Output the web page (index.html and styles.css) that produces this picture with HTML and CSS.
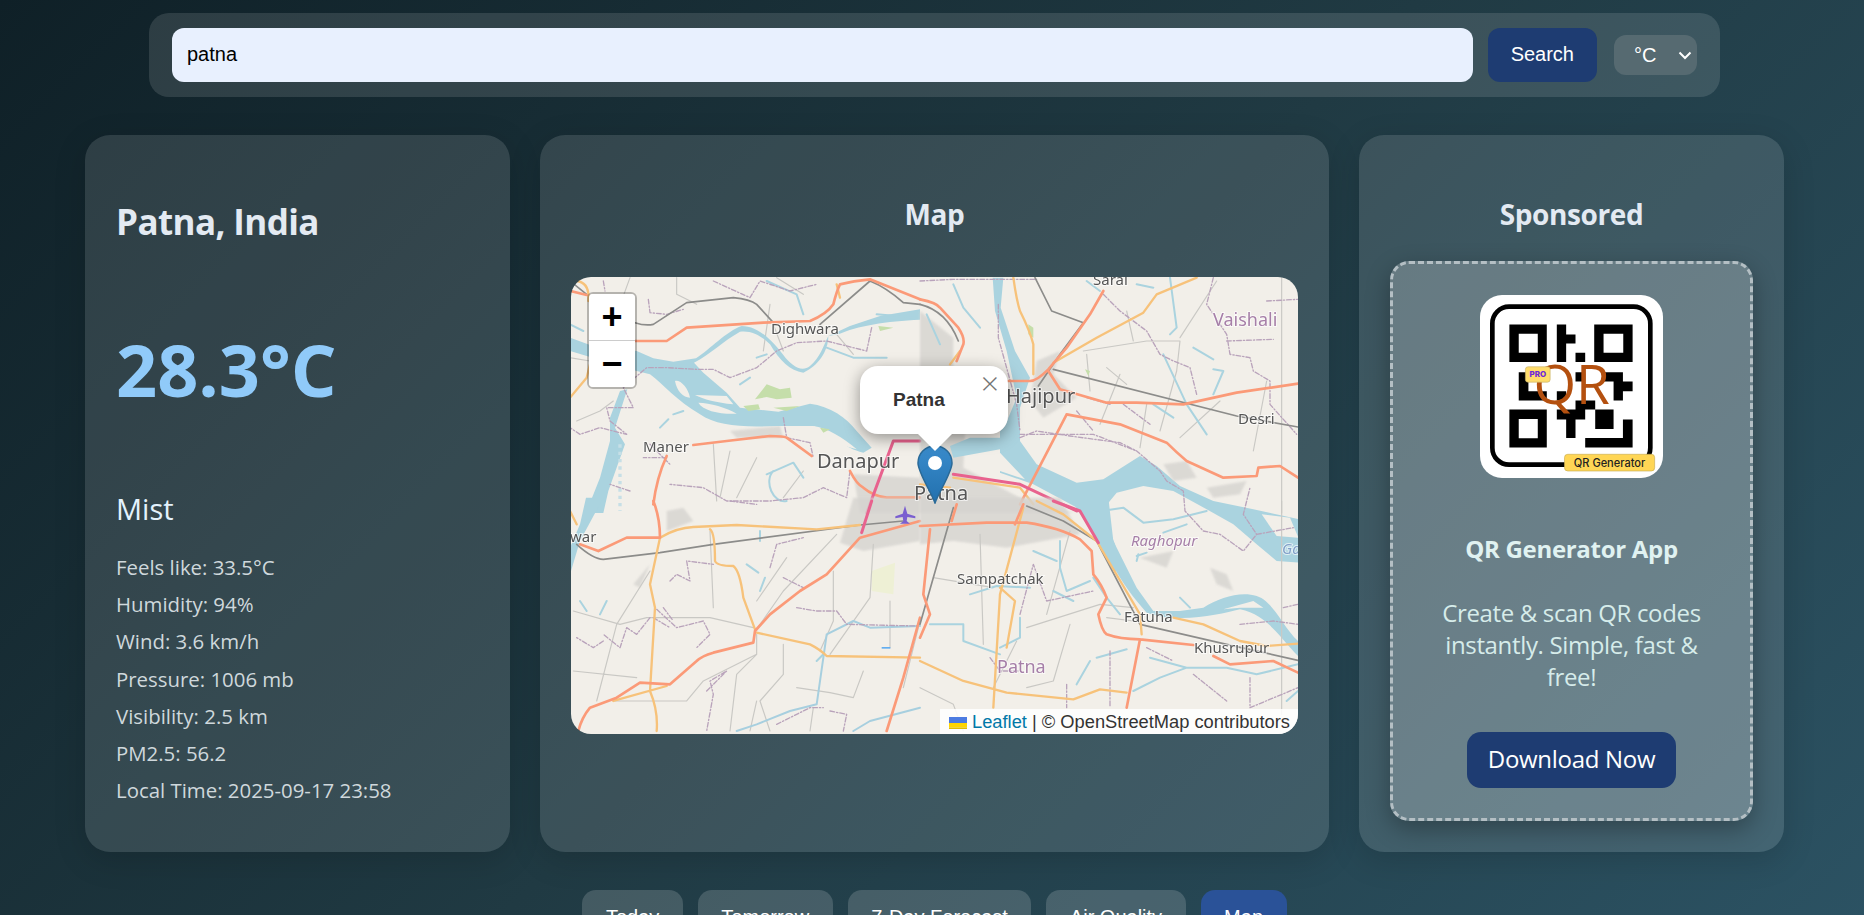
FILE: index.html
```html
<!DOCTYPE html>
<html lang="en">
<head>
<meta charset="utf-8">
<title>Weather</title>
<link rel="stylesheet" href="styles.css">
</head>
<body>
<form class="search-bar">
  <input class="search-input" type="text" value="patna">
  <button class="search-btn" type="button">Search</button>
  <select class="unit"><option>°C</option><option>°F</option></select>
</form>
<main class="layout">
  <section class="card weather">
    <h1 class="city">Patna, India</h1>
    <div class="temp">28.3°C</div>
    <div class="cond">Mist</div>
    <ul class="details">
      <li>Feels like: 33.5°C</li>
      <li>Humidity: 94%</li>
      <li>Wind: 3.6 km/h</li>
      <li>Pressure: 1006 mb</li>
      <li>Visibility: 2.5 km</li>
      <li>PM2.5: 56.2</li>
      <li>Local Time: 2025-09-17 23:58</li>
    </ul>
  </section>
  <section class="card">
    <h2 class="card-title">Map</h2>
    <div class="map">
      <svg class="tiles" width="727" height="457" viewBox="0 0 727 457" xmlns="http://www.w3.org/2000/svg">
        <rect width="727" height="457" fill="#f2efe9"/>
        <!-- main river, under every road -->
        <g transform="translate(429,144) scale(.33333)">
          <path class="river" d="M45 0L60 60L110 130L230 185L310 175L420 105L470 135L540 195L640 240L760 265L900 295V425L830 420L770 370L700 310L620 265L520 210L430 195L350 215L305 270L345 370L365 450L340 450L295 365L240 265L100 190L0 155V150L75 175L0 95V30L30 0Z"/>
          <path class="land" d="M785 280L870 290L895 350L830 345Z"/>
          <path class="stream" d="M305 270L370 260L430 305L520 295L620 270M490 335L560 310M410 405L440 395"/>
        </g>
        <g transform="translate(349,224) scale(.33333)">
          <path class="river" d="M450 -10H565L580 120L650 260L700 330L780 330L850 320C900 290 960 270 1010 285C1060 300 1090 380 1134 420V465C1080 410 1040 340 960 325C900 340 780 370 680 335C640 290 610 250 570 180Z"/>
          <path class="land" d="M910 325L1000 300L1030 320L960 320Z"/>
        </g>
        <!-- top-left tile area -->
        <g transform="translate(-1,-6) scale(.33333)">
          <path class="town" d="M850 610L1050 620V726H870Z"/>
          <path class="town" d="M480 480L630 465L640 500L500 500Z"/>
          <path class="minor" d="M320 20V70L380 100M180 20L140 130M20 450L90 420L130 390M480 540L450 680M560 560L500 680M700 600L640 680M430 520L440 690M0 260L60 270"/>
          <path class="minor" d="M610 160L640 240M700 70L620 20M800 190L850 250M580 240L600 100"/>
          <path class="river" d="M0 200L60 222L200 240L250 262L310 272L378 262C420 235 470 180 515 165C560 165 600 200 640 252C665 285 695 305 720 285C750 260 760 225 775 195L840 165L930 135L1050 115V146C950 150 860 165 805 190L775 195C775 240 745 285 700 305C660 300 630 270 600 220C570 190 540 178 510 182C460 210 420 250 372 275L400 305L470 365L510 410L625 422L720 398C780 405 830 440 860 480L905 530L880 545C820 530 800 500 770 480L730 465L620 465C520 470 440 465 390 430C320 390 280 340 240 310L200 300L0 240Z"/>
          <path class="land" d="M315 330C330 325 355 350 360 380C340 380 320 360 315 330ZM385 395C420 395 470 410 500 428C450 430 400 420 385 395ZM375 372L470 375L490 400C440 395 400 385 375 372ZM730 465C770 470 820 500 860 535C800 520 750 500 730 465Z"/>
          <path class="river" d="M150 360L172 355L135 470L165 520L115 660L100 726H48L90 620L120 510L120 440Z"/>
          <path class="stream" d="M560 260L590 250M510 340L540 320M270 470L295 445M310 430L340 420M0 160L40 180M770 230L850 260L950 260M920 130L1040 140M590 30L680 70L700 130M610 600C580 630 610 700 650 690M590 610L670 575L700 620"/>
          <path class="green" d="M555 385L590 340L630 355L660 350L665 380L620 385L590 378ZM520 405L565 400L570 415L535 420ZM610 410L690 405L650 420ZM925 165L970 170L930 180ZM750 470L780 475L760 485Z"/>
          <path class="dash-stream" d="M150 520V720"/>
          <path class="bound" d="M235 85L240 125L290 130L340 115M430 30L540 80L570 30L660 60L740 40M905 170L890 240L770 210L680 215L620 240L560 290L480 320L430 295L380 295L290 290L230 290L160 350L190 410L110 410L120 450L170 490L90 470L30 490L0 470M640 440L650 500L720 515L730 560M290 560L220 560M840 600L830 680L760 650L700 680L600 690L470 690L400 650L300 640M100 30L105 60M240 520L300 580M180 660L120 640"/>
          <path class="rail" d="M195 155Q225 165 250 160L350 95L490 80Q540 85 560 100L610 155M750 160L900 30Q950 50 1000 95L1050 100M0 30L50 70"/>
          <path class="sec" d="M0 380L50 320L60 280M20 30Q60 35 55 90M800 40L810 80"/>
          <path class="major" d="M0 60L50 72M195 210H290L350 170L580 155L720 150Q770 130 790 100Q800 60 810 40Q850 30 900 25L1050 85M370 522L470 510L600 495Q640 495 650 500L725 555M290 555Q260 620 250 700M840 600Q860 640 880 650Q910 675 950 680L1050 680"/>
          <path class="pink" d="M970 510L890 726M970 510L1050 510"/>
        </g>
        <!-- top-right tile area -->
        <g transform="translate(349,-6) scale(.33333)">
          <path class="town" d="M0 120L100 200L100 290L140 400L130 590L300 680L460 726H0Z"/>
          <path class="town" d="M350 270L420 240L400 310L470 380L370 440L330 390Z"/>
          <path class="town" d="M730 580L800 570L830 620L760 630ZM860 650L980 630L960 670L880 680Z"/>
          <path class="minor" d="M490 240L680 210L780 210L770 300L720 480M600 310L540 460M500 250L510 360M560 290L620 340M620 120L640 210M680 400L660 530M890 30L780 200M900 390L780 500M1040 330L1000 540M1085 20V726"/>
          <path class="river" d="M218 20H250L242 110L285 240L330 320L300 410L300 510L240 535L100 560L90 525L150 500L240 500L290 380L260 240L225 120Z"/>
          <path class="stream" d="M100 40L130 110L180 170M820 230L880 265M880 295L910 300L880 370M20 130L60 220M700 400L760 440M500 30L540 60M650 40L700 50M750 20L770 170L750 190M730 250L800 400L860 490"/>
          <path class="green" d="M325 160L340 170L340 200L325 190ZM495 295L510 300L505 315Z"/>
          <path class="bound" d="M0 30L100 25L350 25M235 100L235 200L290 400L300 480M300 490L520 490L650 540M550 70L600 120L680 180L720 250L760 270L810 290L830 370M880 20L860 100L920 190L930 250L990 260L1000 300L1050 330L1050 400L1130 490M1040 90L1134 85M920 210L1060 205M500 380L570 400M470 420L520 480M610 400L690 460"/>
          <path class="rail" d="M345 20L395 120L490 155L420 250L355 345M400 295L950 435L1134 468M0 100Q80 120 115 210"/>
          <path class="sec" d="M280 20Q290 90 300 120Q330 180 340 220V310M400 275L530 200L670 125L710 70L830 20M90 280L120 240M100 620L300 650L340 700M0 640L90 650"/>
          <path class="major" d="M550 60L510 130L440 230L385 295Q350 330 330 330L265 330M385 300L420 355L560 395L650 395L790 400L950 365L1134 338M440 430L300 700M440 430L600 460L740 515Q770 545 800 570L910 620L1010 615L1015 590L1080 585L1134 620M0 85Q50 95 60 110L115 170Q135 200 130 220L110 270"/>
          <path class="pink" d="M100 610L300 640L470 720"/>
        </g>
        <!-- bottom-left tile area -->
        <g transform="translate(-1,224) scale(.33333)">
          <path class="town" d="M850 -10H1050V120L880 150L810 125Z"/>
          <path class="town" d="M190 250L240 190L210 260ZM290 30L340 20L370 60L290 90Z"/>
          <path class="yellowish" d="M905 210L975 185L970 280L905 270Z"/>
          <path class="minor" d="M10 330L150 370L230 350L420 350L550 380M240 210L140 370L80 600M10 510L200 530M560 385L640 270L800 100M560 400V460L500 520L480 690M560 460L400 540L350 600L130 600M790 210V360L750 450M910 130L900 290L780 460M640 430V520L570 600L600 690M960 300L960 440M880 510L850 590L780 575L680 560M1050 360L1000 560M420 90L430 320M650 170L560 300M560 600L540 690M730 620L720 690"/>
          <path class="river" d="M48 -10H100L30 120L0 220V140L30 70Z"/>
          <path class="stream" d="M570 90V120M530 190L565 215M570 270L585 230M30 300L50 330M90 340L110 300M740 480L760 460"/>
          <path class="blue-stream" d="M500 690L560 670L660 630L740 610L770 400L850 360L900 380L1050 375M850 690L900 660L1050 620"/>
          <path class="bound" d="M100 420L70 440L20 410M240 350L200 400L170 380L150 440L100 400M260 325L320 380L400 360L420 400L380 440M300 240L320 220L360 240L350 180L430 190M410 570L470 510L420 540L430 580L410 690M680 320L740 330L800 330L830 370L1040 375M640 230L700 260M600 200L620 130L700 110M780 630L830 640L820 690M620 670L720 620L760 620M280 320L310 360M250 350L300 380M480 0L560 10"/>
          <path class="rail" d="M20 130Q70 175 100 175L270 155L430 130L870 72L1000 60"/>
          <path class="sec" d="M270 110Q320 80 370 78L500 72L740 85L870 72M420 85Q435 95 435 180Q440 195 490 195Q510 210 520 290L555 385M270 110L240 250L255 320L240 570Q265 630 260 690M560 395L720 430Q750 445 770 465L1050 470M290 555L130 600M0 30L20 70"/>
          <path class="major" d="M85 150L170 110L270 110Q270 50 250 0M1050 60L870 110L770 220L690 270L600 340L555 390L550 425L430 455Q395 465 380 480L300 550L210 545L140 590L60 620Q35 650 25 690M85 150L30 130M1050 350L1000 530L950 690"/>
          <path class="pink" d="M905 0L875 95"/>
          <path class="plane" d="M1005 14L1012 38L1036 46V52L1012 48L1010 60L1020 68H990L1000 60L998 48L976 52V46L998 38Z"/>
          <rect x="935" y="438" width="26" height="5" fill="#64aef0"/>
        </g>
        <!-- bottom-right tile area -->
        <g transform="translate(349,224) scale(.33333)">
          <path class="town" d="M0 -10H420L480 100L260 140L100 120L0 130Z"/>
          <path class="town" d="M660 170L760 150L740 200ZM870 200L920 220L940 270L890 250Z"/>
          <path class="minor" d="M180 100L190 430M40 230L220 260M320 380L540 310L640 320M450 370L400 540L320 560M290 420L220 560M0 560L100 610L130 690M450 90L380 340M1085 0V640M560 350L640 360"/>
          <path class="stream" d="M780 290L810 320M420 120L420 200L440 270L510 240M410 180L340 150M150 280L230 255L330 260M400 270L460 300M520 230L560 290L600 340M300 350L300 410L240 440M690 470L800 500L920 500L1010 520L1134 490M530 470L620 445M470 550L510 480M30 370L130 370L130 420L240 460M640 570L720 530L800 500M1100 600L1134 570M650 180L655 160"/>
          <path class="bound" d="M570 450V620M440 550V620M960 370L1060 360L1134 370M300 340L340 190L380 300L520 270M1090 320L1134 310M680 440L760 480M990 530V620L1134 560M210 470L240 510L300 510M820 520L920 600"/>
          <path class="rail" d="M320 15L430 60L530 120L660 370L920 430L1134 478M100 20L0 370"/>
          <path class="sec" d="M350 0L430 40L530 120L660 340L665 400M760 350L850 370L960 420L1040 435L1134 428M310 20L240 280L220 620M240 260L285 300L260 440M0 480L130 540L260 575L460 595L540 565L620 575"/>
          <path class="major" d="M0 75L200 65L320 65Q420 80 480 115L515 150L520 220Q545 250 560 290L535 340Q545 390 560 400Q600 415 660 415L820 432M880 465L930 490L1060 480L1134 515M30 85L10 280L30 340L0 410M310 10L285 70M660 415L620 620M110 10L95 60"/>
          <path class="pink" d="M400 0L480 30L535 125"/>
        </g>
        <!-- boundaries over the Ganges -->
        <g transform="translate(429,144) scale(.33333)">
          <path class="bound" d="M60 50L110 30L210 45L360 65L410 90L480 150L500 180L550 210L555 270L610 330L660 340L730 390L770 340L730 280L750 200M770 340L880 320"/>
        </g>
        <g class="labels">
          <text class="l-city" x="200" y="57" font-size="15">Dighwara</text>
          <text class="l-city" x="72" y="175" font-size="15">Maner</text>
          <text class="l-city" x="246" y="191" font-size="20">Danapur</text>
          <text class="l-city" x="522" y="8" font-size="15">Sarai</text>
          <text class="l-city" x="435" y="126" font-size="20">Hajipur</text>
          <text class="l-city" x="667" y="147" font-size="15">Desri</text>
          <text class="l-city" x="-1" y="265" font-size="15">war</text>
          <text class="l-city" x="386" y="307" font-size="15">Sampatchak</text>
          <text class="l-city" x="553" y="345" font-size="15">Fatuha</text>
          <text class="l-city" x="623" y="376" font-size="15">Khusrupur</text>
          <text class="l-city" x="343" y="223" font-size="20">Patna</text>
          <text class="l-admin" x="642" y="49" font-size="18">Vaishali</text>
          <text class="l-admin" x="426" y="396" font-size="18">Patna</text>
          <text class="l-admin l-ital" x="560" y="269" font-size="15">Raghopur</text>
          <text class="l-water" x="711" y="277" font-size="15">Ga</text>
        </g>
      </svg>
      <div class="zoom-ctl">
        <a class="zoom-btn zoom-in">+</a>
        <a class="zoom-btn">−</a>
      </div>
      <svg class="marker" width="36" height="59" viewBox="0 0 36 59" xmlns="http://www.w3.org/2000/svg">
        <defs>
          <linearGradient id="pin" x1="0" y1="0" x2="0" y2="1">
            <stop offset="0" stop-color="#3a8ccc"/>
            <stop offset="1" stop-color="#2270ae"/>
          </linearGradient>
        </defs>
        <path d="M18 1C8 1 1 8.500 1 18C1 27 14 47 18 58C22 47 35 27 35 18C35 8.500 28 1 18 1Z" fill="url(#pin)" stroke="#2a6a98" stroke-width="1.500"/>
        <circle cx="18" cy="18" r="7" fill="#fff"/>
      </svg>
      <div class="popup">
        <span class="popup-text">Patna</span>
        <span class="popup-close">×</span>
      </div>
      <div class="popup-tip"></div>
      <div class="attribution">
        <svg class="flag" width="18" height="12" viewBox="0 0 12 8" xmlns="http://www.w3.org/2000/svg"><path fill="#4C7BE1" d="M0 0h12v4H0z"/><path fill="#FFD500" d="M0 4h12v3H0z"/><path fill="#E0BC00" d="M0 7h12v1H0z"/></svg>
        <a class="attr-link">Leaflet</a> <span class="attr-sep">|</span> © OpenStreetMap contributors
      </div>
    </div>
  </section>
  <aside class="card sponsor">
    <h2 class="card-title">Sponsored</h2>
    <div class="ad">
      <svg class="qr" width="183" height="183" viewBox="30 27 548 548" xmlns="http://www.w3.org/2000/svg">
        <rect x="30" y="27" width="548" height="548" fill="#fff"/>
        <rect x="67" y="62" width="473" height="473" rx="50" fill="none" stroke="#000" stroke-width="14"/>
        <path fill-rule="evenodd" d="M118 115H230V228H118ZM146 143V200H203V143ZM372 115H487V228H372ZM400 143V200H459V143ZM118 370H230V484H118ZM146 398V456H203V398Z"/>
        <path d="M260 115H288V145H316V172H288V228H260ZM316 200H345V228H316ZM146 258H175V315H230V343H146ZM260 315H288V343H260ZM316 258H345V286H316ZM400 258H458V286H487V315H458V343H430V286H400ZM260 370H345V400H316V455H288V400H260ZM316 343H375V370H316ZM375 370H430V428H375ZM345 455H458V400H487V484H345Z"/>
        <text class="qr-big" x="190" y="352" font-size="164">QR</text>
        <rect x="166" y="242" width="74" height="46" rx="8" fill="#ffdc6b" stroke="#c9b26a" stroke-width="2"/>
        <text class="qr-pro" x="203" y="273" font-size="24" text-anchor="middle">PRO</text>
        <rect x="283" y="504" width="270" height="50" rx="10" fill="#ffd655" stroke="#c9ae55" stroke-width="2"/>
        <text class="qr-tag" x="418" y="541" font-size="33" text-anchor="middle">QR Generator</text>
      </svg>
      <h3 class="ad-title">QR Generator App</h3>
      <p class="ad-text">Create &amp; scan QR codes instantly. Simple, fast &amp; free!</p>
      <a class="ad-btn">Download Now</a>
    </div>
  </aside>
</main>
<nav class="tabs">
  <button class="tab" type="button">Today</button>
  <button class="tab" type="button">Tomorrow</button>
  <button class="tab" type="button">7-Day Forecast</button>
  <button class="tab" type="button">Air Quality</button>
  <button class="tab active" type="button">Map</button>
</nav>
</body>
</html>
```
FILE: styles.css
```css
* { box-sizing: border-box; }
html { overflow: hidden; }
body {
  margin: 0;
  padding: 13px 0 30px 5px;
  background: linear-gradient(135deg, #0f2027, #203a43, #2c5364);
  font-family: "Open Sans", sans-serif;
  color: #e3eaf0;
}
.search-bar {
  width: 1571px;
  margin: 0 auto;
  display: flex;
  align-items: center;
  gap: 15px;
  padding: 15px 23px;
  border-radius: 20px;
  background: rgba(255,255,255,.12);
}
.search-input {
  flex: 1;
  height: 54px;
  padding: 0 15px 2px;
  border: 0;
  border-radius: 12px;
  background: #e8f0fe;
  color: #000;
  font: 20px "Liberation Sans", sans-serif;
}
.search-btn {
  height: 54px;
  padding: 0 23px 2px;
  border: 0;
  border-radius: 12px;
  background: #1e3c72;
  color: #fff;
  font: 20px "Liberation Sans", sans-serif;
}
.unit {
  appearance: none;
  width: 83px;
  height: 40px;
  margin-left: 2px;
  padding-left: 20px;
  border: 0;
  border-radius: 12px;
  background: #566a71 url("data:image/svg+xml,%3Csvg xmlns='http://www.w3.org/2000/svg' width='14' height='9' viewBox='0 0 14 9'%3E%3Cpath d='M1.500 1.500L7 7L12.500 1.500' fill='none' stroke='%23fff' stroke-width='2'/%3E%3C/svg%3E") no-repeat right 5px center;
  color: #fff;
  font: 20px "Liberation Sans", sans-serif;
}
.layout {
  width: 1699px;
  margin: 38px auto 0;
  display: grid;
  grid-template-columns: 425px 1fr 425px;
  gap: 30px;
}
.card {
  padding: 31px;
  border-radius: 25px;
  background: rgba(255,255,255,.12);
  box-shadow: 0 8px 32px rgba(0,0,0,.15);
}
.weather { color: #e3f2fd; }
.city {
  margin: 32px 0 0;
  font-size: 35px;
  line-height: 48px;
  font-weight: 700;
  color: #e3eaf2;
  letter-spacing: -.6px;
}
.temp {
  margin-top: 75px;
  font-size: 72px;
  line-height: 96px;
  font-weight: 700;
  color: #90caf9;
}
.cond {
  margin-top: 72px;
  font-size: 29px;
  line-height: 40px;
  color: #e3f2fd;
}
.details {
  margin: 20px 0 0;
  padding: 0;
  list-style: none;
  font-size: 20.400px;
  line-height: 37.200px;
  color: #cfd8dc;
}
.card-title {
  margin: 28px 0 27px;
  font-size: 28px;
  line-height: 40px;
  font-weight: 700;
  text-align: center;
  color: #e3eaf2;
  letter-spacing: -.4px;
}
.map {
  position: relative;
  height: 457px;
  margin-top: 43px;
  border-radius: 20px;
  overflow: hidden;
  font-family: "Liberation Sans", sans-serif;
}
.tiles { display: block; filter: blur(.35px); }
.town { fill: #d6d4d0; opacity: .8; filter: blur(2.500px); }
.yellowish { fill: #eef0d5; }
.land { fill: #f2efe9; }
.river { fill: #aad3df; }
.green { fill: #c5deaa; }
.plane { fill: #7a5fd0; }
.stream, .minor, .bound, .rail, .sec, .major, .pink, .blue-stream, .dash-stream {
  fill: none;
  stroke-linecap: round;
  stroke-linejoin: round;
}
.stream { stroke: #aad3df; stroke-width: 6; }
.blue-stream { stroke: #a7cfdf; stroke-width: 6; }
.dash-stream { stroke: #c6dfe6; stroke-width: 10; stroke-dasharray: 10 12; stroke-linecap: butt; }
.minor { stroke: #c9c8c4; stroke-width: 3.500; }
.bound { stroke: #b9a3bb; stroke-width: 4; stroke-dasharray: 14 6 4 6; }
.rail { stroke: #8c8c8a; stroke-width: 5; }
.sec { stroke: #f7c27a; stroke-width: 7; }
.major { stroke: #fb9a78; stroke-width: 8; }
.pink { stroke: #e8628e; stroke-width: 9; }
.labels { font-family: "Noto Sans", sans-serif; paint-order: stroke; stroke: rgba(255,255,255,.65); stroke-width: 2px; }
.l-city { fill: #555; }
.l-admin { fill: #a67fa8; }
.l-ital { font-style: italic; }
.l-water { fill: #7f9fc8; font-style: italic; }
.zoom-ctl {
  position: absolute;
  left: 16px;
  top: 15px;
  border: 2.500px solid rgba(0,0,0,.25);
  border-radius: 6px;
  background-clip: padding-box;
}
.zoom-btn {
  display: block;
  width: 46px;
  height: 46px;
  background: #fff;
  color: #000;
  text-align: center;
  font: bold 36px/51px "Liberation Mono", monospace;
  border-radius: 0 0 4px 4px;
}
.zoom-in { border-bottom: 1px solid #ccc; border-radius: 4px 4px 0 0; height: 47px; }
.marker { position: absolute; left: 346px; top: 168px; }
.popup {
  position: absolute;
  left: 289px;
  top: 89px;
  width: 148px;
  height: 68px;
  border-radius: 18px;
  background: #fff;
  box-shadow: 0 4px 16px rgba(0,0,0,.4);
  color: #333;
}
.popup-text {
  position: absolute;
  left: 33px;
  top: 23px;
  font: bold 19px/22px "Liberation Sans", sans-serif;
}
.popup-close {
  position: absolute;
  right: 9px;
  top: 1px;
  font: 300 32px/32px "Open Sans", sans-serif;
  color: #757575;
}
.popup-tip {
  position: absolute;
  left: 347px;
  top: 157px;
  width: 0;
  height: 0;
  border-left: 17px solid transparent;
  border-right: 17px solid transparent;
  border-top: 17px solid #fff;
}
.attribution {
  position: absolute;
  right: 0;
  bottom: 0;
  padding: 0 8px 0 9px;
  height: 25px;
  line-height: 25px;
  font-size: 18.300px;
  color: #333;
  background: rgba(255,255,255,.85);
  white-space: nowrap;
}
.flag { vertical-align: -1px; }
.attr-link { color: #0078a8; }
.sponsor { text-align: center; }
.ad {
  height: 560px;
  padding-top: 31px;
  border: 3px dashed #b4bfc4;
  border-radius: 19px;
  background: rgba(255,255,255,.22);
  box-shadow: 0 8px 24px rgba(0,0,0,.3);
}
.qr { display: block; margin: 0 auto; border-radius: 22px; }
.qr-big { font-family: "Open Sans", sans-serif; fill: #b4500f; }
.qr-pro { font-family: "Inter", sans-serif; font-weight: 800; fill: #6d28d9; }
.qr-tag { font-family: "Inter", sans-serif; font-weight: 500; fill: #222; }
.ad-title {
  margin: 55px 0 0;
  font-size: 24px;
  line-height: 32px;
  font-weight: 700;
  color: #e0f2f1;
  letter-spacing: -.3px;
}
.ad-text {
  margin: 32px 40px 0;
  font-size: 24px;
  line-height: 32px;
  color: #d6ecea;
  letter-spacing: -.35px;
}
.ad-btn {
  display: block;
  width: 209px;
  height: 56px;
  margin: 39px auto 0;
  border-radius: 14px;
  background: #1e3c72;
  color: #fff;
  font-size: 24px;
  line-height: 54px;
  letter-spacing: -.3px;
}
.tabs {
  margin-top: 38px;
  display: flex;
  justify-content: center;
  gap: 15px;
}
.tab {
  height: 54px;
  padding: 0 23.500px;
  border: 0;
  border-radius: 14px;
  background: rgba(255,255,255,.16);
  color: #fff;
  font: 20px "Liberation Sans", sans-serif;
}
.tab.active { background: #2a5298; }
```
